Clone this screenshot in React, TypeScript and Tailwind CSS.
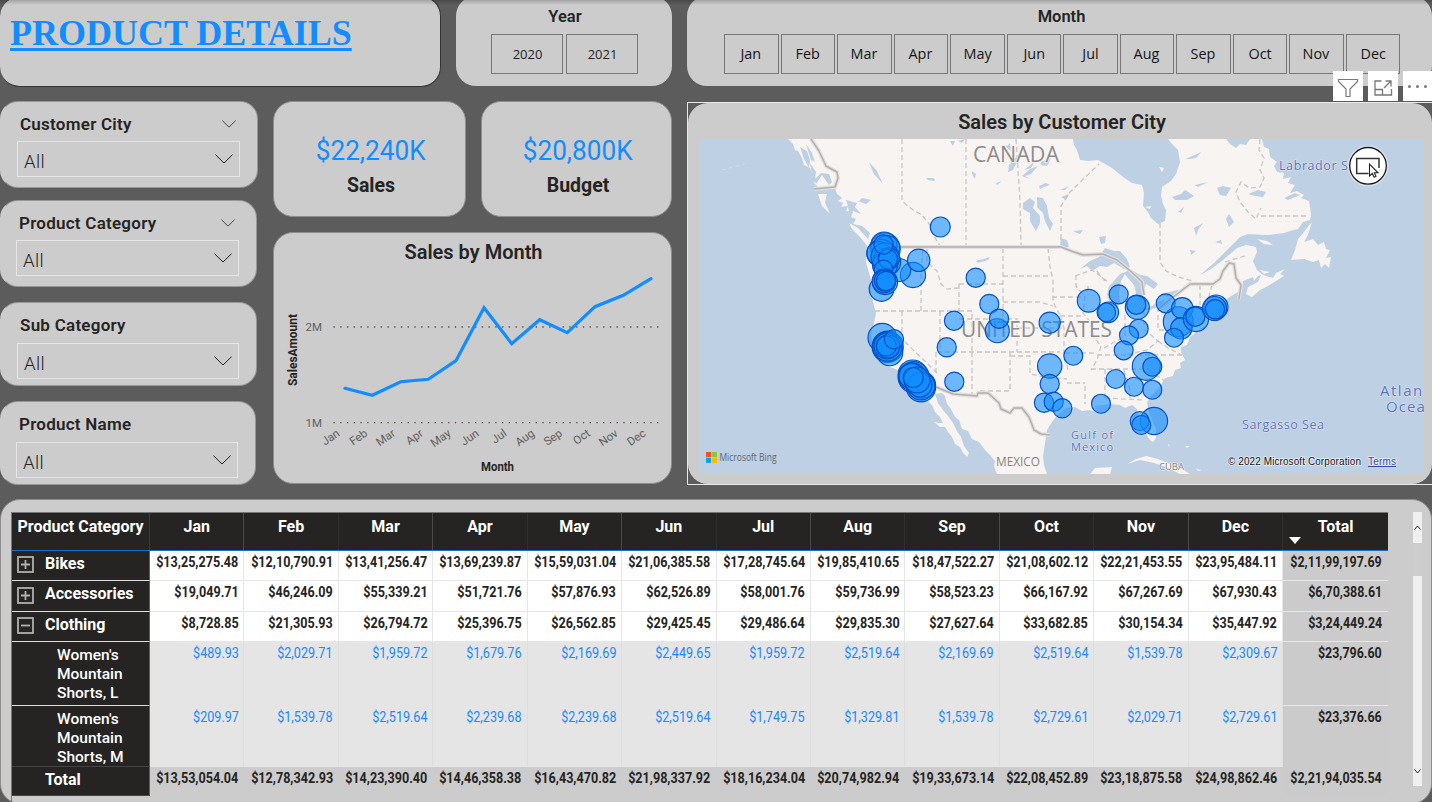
import React from "react";

const MONTHS = ["Jan", "Feb", "Mar", "Apr", "May", "Jun", "Jul", "Aug", "Sep", "Oct", "Nov", "Dec"];

const ROWS = [
  { label: "Bikes", kind: "plus", cells: ["$13,25,275.48", "$12,10,790.91", "$13,41,256.47", "$13,69,239.87", "$15,59,031.04", "$21,06,385.58", "$17,28,745.64", "$19,85,410.65", "$18,47,522.27", "$21,08,602.12", "$22,21,453.55", "$23,95,484.11"], total: "$2,11,99,197.69" },
  { label: "Accessories", kind: "plus", cells: ["$19,049.71", "$46,246.09", "$55,339.21", "$51,721.76", "$57,876.93", "$62,526.89", "$58,001.76", "$59,736.99", "$58,523.23", "$66,167.92", "$67,267.69", "$67,930.43"], total: "$6,70,388.61" },
  { label: "Clothing", kind: "minus", cells: ["$8,728.85", "$21,305.93", "$26,794.72", "$25,396.75", "$26,562.85", "$29,425.45", "$29,486.64", "$29,835.30", "$27,627.64", "$33,682.85", "$30,154.34", "$35,447.92"], total: "$3,24,449.24" },
  { label: "Women's Mountain Shorts, L", kind: "child", cells: ["$489.93", "$2,029.71", "$1,959.72", "$1,679.76", "$2,169.69", "$2,449.65", "$1,959.72", "$2,519.64", "$2,169.69", "$2,519.64", "$1,539.78", "$2,309.67"], total: "$23,796.60" },
  { label: "Women's Mountain Shorts, M", kind: "child", cells: ["$209.97", "$1,539.78", "$2,519.64", "$2,239.68", "$2,239.68", "$2,519.64", "$1,749.75", "$1,329.81", "$1,539.78", "$2,729.61", "$2,029.71", "$2,729.61"], total: "$23,376.66" },
  { label: "Total", kind: "total", cells: ["$13,53,054.04", "$12,78,342.93", "$14,23,390.40", "$14,46,358.38", "$16,43,470.82", "$21,98,337.92", "$18,16,234.04", "$20,74,982.94", "$19,33,673.14", "$22,08,452.89", "$23,18,875.58", "$24,98,862.46"], total: "$2,21,94,035.54" },
];

const ROW_HEIGHTS: Record<string, string> = {
  Bikes: "h-[30px]",
  Accessories: "h-[31px]",
  Clothing: "h-[30px]",
  "Women's Mountain Shorts, L": "h-[64px]",
  "Women's Mountain Shorts, M": "h-[61px]",
  Total: "h-[29px]",
};

function Chevron({ className }: { className: string }) {
  return (
    <svg className={className} viewBox="0 0 18 10" fill="none" stroke="#252423" strokeWidth="1">
      <path d="M0.5 0.7 L9 9 L17.5 0.7" />
    </svg>
  );
}

function Slicer({ title, chevron, className, boxClass }: { title: string; chevron?: boolean; className: string; boxClass: string }) {
  return (
    <section className={`rounded-[18px] border border-[#989898] border-l-transparent bg-[#cccccc] ${className}`}>
      <div className="flex h-5 items-center justify-between pr-5 pl-[3px]">
        <h2 className="text-[17px] leading-5 font-semibold tracking-[.25px] whitespace-nowrap">{title}</h2>
        {chevron && <Chevron className="mr-[-16px] h-[8px] w-[14px]" />}
      </div>
      <div className={`flex h-9 items-center justify-between border border-[#e6e6e6] pr-[6px] pl-[6px] ${boxClass}`}>
        <span className="pt-[5px] text-[18.5px] leading-5 font-light tracking-[.4px]">All</span>
        <Chevron className="h-[10px] w-[18px]" />
      </div>
    </section>
  );
}

const POINTS: [number, number][] = [
  [345, 388.3], [372.3, 395.3], [400.7, 381.7], [428.3, 379.3], [456, 360.7], [484, 307.7],
  [511.7, 343.7], [539.7, 319.7], [567.3, 332.7], [595, 306.7], [623.3, 295.3], [651, 278.7],
];

function LineChart() {
  return (
    <svg className="block h-[214px] w-full" viewBox="274 266 397 214">
      <g stroke="#4d4d4d" strokeWidth="1.3" strokeDasharray="1.3 5.44">
        <line x1="333.5" y1="327" x2="660" y2="327" />
        <line x1="333.5" y1="422.7" x2="660" y2="422.7" />
      </g>
      <g className="text-[11.5px]" fill="#605e5c">
        <text x="322" y="331" textAnchor="end">2M</text>
        <text x="322" y="427" textAnchor="end">1M</text>
        {MONTHS.map((m, i) => (
          <text key={m} transform={`translate(${340.5 + i * 27.83} 435) rotate(-35)`} textAnchor="end">{m}</text>
        ))}
      </g>
      <g className="text-[12px] font-bold" fill="#252423">
        <text x="481" y="471" textLength="33" lengthAdjust="spacingAndGlyphs">Month</text>
        <text transform="translate(296.5 386) rotate(-90)" textLength="72" lengthAdjust="spacingAndGlyphs">SalesAmount</text>
      </g>
      <polyline points={POINTS.map((p) => p.join(",")).join(" ")} fill="none" stroke="#118dff" strokeWidth="3.2" strokeLinecap="round" strokeLinejoin="miter" />
    </svg>
  );
}

const BUBBLES: [number, number, number][] = [
  [940.3, 227, 10], [913, 275, 12.6], [899.3, 270, 11.5], [918.7, 260.3, 11.2], [975.7, 277.7, 9.6],
  [881.5, 289, 12.3], [885, 247.5, 14.6], [884, 245, 13], [887, 249, 13.3], [881, 253.3, 14], [878.5, 253.3, 11.7], [886.7, 262, 14], [885, 265, 12.5],
  [885, 257, 14], [889, 258.5, 10.7], [888, 259, 9.5], [883.5, 244.5, 9.6], [883.5, 269.5, 9.4], [885, 282, 12.6], [884, 281, 11.8], [885, 280.5, 10.6], [886, 281, 9.6],
  [882.3, 337.7, 14.3], [887.7, 346.7, 15.6], [889.7, 352.7, 13], [887.5, 346.5, 14.6], [887, 346, 13], [888, 346.5, 11.6], [886.3, 346, 10], [894, 339.3, 9.6],
  [912.7, 374.5, 14.5], [913.7, 377.3, 15.6], [921, 387.3, 14.6], [922.3, 385, 13.3], [912.5, 377, 14], [911.7, 376, 12.7], [921, 386, 13.8], [920, 385, 12], [917, 380, 13], [913.3, 377.5, 10],
  [989.3, 304, 9.6], [997.3, 330.7, 12], [999, 318.7, 9.6], [954, 320.7, 9.6], [946.7, 347.3, 9.6], [954.3, 381.7, 9.6],
  [1049.7, 322.7, 10.6], [1049.7, 366, 12.2], [1049.7, 384, 9.6], [1044, 402.7, 9.6], [1053.7, 401.7, 9.6], [1062.3, 408.3, 9.6],
  [1088.7, 300.7, 11.4], [1118.7, 294.3, 9.5], [1108.3, 312.3, 10.3], [1106.3, 312.3, 9.3], [1137.3, 307.3, 12], [1136.3, 304.7, 9.6],
  [1178.3, 321.7, 15], [1165.7, 303.3, 9.5], [1182.3, 308.3, 10.7], [1181.3, 328.3, 10.7], [1196, 319, 12.6], [1195.3, 316.7, 9.6],
  [1174, 337.7, 9.5], [1216, 307, 12], [1214.5, 308.5, 12], [1215, 309.3, 9.6], [1138.7, 328.7, 9.5], [1129, 335.3, 9.5], [1123.7, 350.3, 9.5],
  [1073.3, 355.7, 9.5], [1146.3, 366.3, 14], [1152.3, 366.7, 9.5], [1115.7, 379, 9.5], [1134, 386.7, 9.5], [1152.3, 389.7, 9.5],
  [1101, 403.7, 9.5], [1154, 421, 13.6], [1139.7, 421, 9.5], [1141.3, 425, 9.5],
];

const LAND = `M788 139 L793 144 L795 150 L798 151 L802 158 L804 165 L810 168 L812 174 L816 179 L814 183 L818 187 L825 189 L835 188 L837 194 L842 198 L838 201
L843 203 L841 207 L848 206 L846 211 L853 212 L851 217 L856 219 L853 224 L862 226 L870 233 L868 240 L868 250 L866 262 L871 280 L871 292 L873 302 L876 313 L874 323 L871 333
L873 350 L878 357 L888 366 L898 370 L900 383 L905 390 L915 397 L927 400 L932 405 L935 412 L940 417 L943 423 L938 423 L934 422 L940 427 L945 427 L948 432 L952 437 L955 444 L960 447
L963 453 L967 457 L969 453 L964 446 L961 437 L957 431 L953 423 L948 416 L943 410 L938 403 L935 394 L942 393 L945 396 L947 404 L951 409 L955 417 L959 420 L962 429 L968 431 L972 439 L979 442
L985 450 L990 455 L995 461 L994 466 L997 474 L1047 474 L1044 465 L1043 457 L1045 443 L1047 430 L1052 422 L1058 414 L1066 408 L1075 407 L1082 411 L1090 410 L1098 413 L1095 406 L1110 404 L1120 405 L1125 408 L1132 405
L1137 409 L1139 421 L1145 432 L1150 440 L1153 442 L1156 438 L1156 429 L1150 415 L1147 403 L1150 397 L1160 387 L1165 378 L1173 376 L1175 370 L1181 368 L1180 363 L1185 360 L1181 352 L1181 347 L1187 345 L1190 337 L1200 329
L1210 322 L1213 316 L1220 318 L1217 311 L1219 306 L1228 298 L1238 292 L1242 287 L1243 281 L1253 277 L1254 281 L1258 276 L1261 275 L1258 282 L1248 287 L1246 294 L1252 297 L1260 290 L1268 286 L1276 281 L1284 276 L1280 274 L1285 269 L1276 273 L1273 278
L1263 275 L1257 270 L1253 261 L1257 252 L1256 247 L1246 245 L1237 248 L1223 260 L1211 269 L1200 275 L1214 263 L1220 257 L1230 247 L1240 237 L1248 234 L1267 235 L1284 233 L1290 231 L1298 229 L1303 222 L1310 220 L1311 215 L1310 207 L1309 201
L1301 198 L1304 195 L1297 191 L1290 193 L1295 185 L1288 183 L1291 177 L1283 179 L1284 173 L1277 172 L1274 166 L1277 162 L1270 157 L1269 149 L1264 147 L1262 139 L1250 139 L1246 145 L1240 144 L1236 148 L1230 144 L1226 139 L1168 139 L1171 143 L1178 150 L1180 162 L1176 174 L1171 181
L1162 187 L1161 196 L1163 204 L1166 210 L1165 221 L1158 224 L1151 218 L1148 212 L1143 206 L1144 193 L1142 185 L1132 183 L1123 177 L1112 168 L1098 160 L1088 161 L1080 160 L1077 150 L1074 145 L1073 139 Z`;

const WATER = [
  "M800 147 L807 151 L810 160 L809 168 L804 159 Z M810 163 L816 172 L815 179 L821 173 L829 174 L832 182 L829 185 L822 175 L816 184 L812 175 Z M806 144 L812 153 L815 162 L811 160 Z",
  "M846 200 L857 203 L862 198 L871 200 L866 204 L858 201 L855 207 L861 214 L853 211 L850 217 L848 206 Z",
  "M869 162 L877 171 L880 178 L883 184 L874 174 Z M926 178 L934 178 L935 181 L928 180 Z M950 141 L955 141 L953 146 Z M958 141 L965 139 L962 143 Z M972 171 L976 174 L975 179 L972 174 Z M996 183 L1002 181 L997 185 Z",
  "M1023 203 L1030 198 L1035 202 L1033 208 L1040 216 L1040 223 L1036 231 L1030 221 L1030 213 L1023 209 Z M1037 197 L1043 198 L1047 206 L1049 218 L1053 224 L1050 231 L1045 221 L1043 213 L1037 207 Z",
  "M1009 165 L1016 157 L1018 160 L1013 170 L1008 172 Z M1022 176 L1030 169 L1038 166 L1031 174 L1025 176 L1030 179 Z M1039 186 L1046 183 L1050 185 L1044 187 L1040 189 Z M1041 162 L1051 158 L1047 166 L1041 165 Z M1024 170 L1035 161 L1031 168 Z M1006 147 L1010 143 L1011 151 Z",
  "M1060 238 L1067 240 L1069 247 L1062 248 Z M1073 231 L1083 230 L1080 234 Z M1099 237 L1106 236 L1105 243 L1101 244 Z M1060 190 L1069 186 L1065 190 Z M1061 197 L1069 194 L1066 200 Z M976 261 L983 259 L990 257 L988 260 L981 262 L978 263 Z",
  "M1185 159 L1195 155 L1201 152 L1196 158 L1190 159 Z M1172 197 L1181 194 L1185 190 L1194 196 L1187 200 L1175 200 Z M1195 185 L1208 182 L1198 187 Z M1217 188 L1223 186 L1231 188 L1226 196 L1220 195 Z M1248 194 L1258 190 L1266 192 L1263 197 L1255 196 Z M1194 228 L1203 223 L1198 230 L1196 236 Z M1226 219 L1229 214 L1234 222 L1229 227 Z M1178 212 L1184 207 L1181 213 Z M1284 198 L1295 193 L1300 195 L1288 200 Z M1190 250 L1196 251 L1191 255 Z M1215 242 L1221 240 L1222 244 Z",
  "M1080 269 L1090 261 L1099 257 L1105 248 L1114 251 L1120 251 L1127 259 L1130 267 L1124 269 L1114 263 L1107 267 L1100 266 L1092 271 L1087 266 Z",
  "M1109 286 L1114 281 L1119 275 L1122 273 L1126 272 L1121 281 L1119 293 L1120 302 L1117 308 L1110 303 L1107 295 Z",
  "M1124 273 L1130 269 L1140 275 L1147 276 L1154 281 L1158 284 L1154 289 L1146 284 L1143 293 L1142 302 L1137 298 L1134 285 L1128 278 Z",
  "M1140 310 L1150 307 L1158 302 L1165 299 L1161 306 L1150 310 Z M1160 294 L1169 292 L1178 290 L1177 295 L1167 297 Z",
];

const STATE_LINES = [
  "M902 139 V201 L913 210 L922 215 L930 225 L934 236 L940 246", "M966 139 V246", "M1016 139 L1020 200 L1021 246", "M1061 247 V206 L1070 192 L1099 164",
  "M1160 223 V262 L1166 271 L1178 277 L1193 281", "M1260 139 L1259 150 L1264 158 L1260 170 L1264 178 L1260 187 L1249 188 L1241 182 L1236 192 L1240 202 L1248 212 L1256 219 L1261 208 M1261 216 H1308",
  "M875 311 H960 M902 311 V339 L937 373 M921 311 V275 L923 248 M927 248 V262 L937 271 L941 284 L947 289 L958 288 M959 284 V311 M940 311 V352 M959 284 H1003 M1003 248 V319 M1003 276 H1051 M959 311 H972 V352 M959 319 H1017 V352 M937 352 H1060 M972 352 V395 M936 352 V374 M1010 352 V391 H979 M1017 328 H1064 M1003 302 H1040 L1053 306",
  "M1048 248 L1050 267 L1053 280 V302 L1060 315 L1064 328 V352 L1068 370 M1010 356 H1030 V374 L1044 377 L1067 379 M1052 297 H1085 M1076 275 V286 L1085 297 L1083 313 L1091 323 L1094 337 L1101 346 L1097 360 L1091 370 M1060 316 H1083 M1065 353 H1094 M1067 383 H1085 M1085 386 V404 M1105 369 V400 M1091 369 H1149 M1097 355 H1182 M1124 370 L1130 390 V401 M1105 398 L1145 400 M1125 315 V337 M1144 312 V328 M1104 348 L1125 336 M1144 329 L1158 341 L1147 350 L1124 355 M1158 307 V330 H1190 M1149 370 L1166 382 M1158 341 L1168 348 L1182 355",
  "M1200 285 V305 M1212 285 L1207 304 M1075 276 L1092 270 L1107 281 M1105 281 L1090 263 M1088 286 V295 M1225 262 L1245 256",
];

function MapCanvas() {
  return (
    <svg className="block h-[335px] w-[725px]" viewBox="699 139 725 335">
      <rect x="699" y="139" width="725" height="335" fill="#bed0e4" />
      <path d="M722 170 L748 163" stroke="#cddbe9" strokeDasharray="4 3" />
      <path d={LAND} fill="#f7f4f2" />
      <g fill="#f7f4f2">
        <path d="M818 194 L827 194 L825 202 L830 214 L822 206 Z M849 223 L858 228 L868 239 L868 247 L860 237 L852 229 Z" />
        <path d="M1309 225 L1312 222 L1308 235 L1304 242 L1313 239 L1318 245 L1324 242 L1326 249 L1330 250 L1326 258 L1331 257 L1329 268 L1325 264 L1321 268 L1319 260 L1313 262 L1304 259 L1291 260 L1295 250 L1298 239 L1304 232 Z" />
        <path d="M1257 239 L1267 241 L1273 245 L1264 244 Z M1260 270 L1270 272 L1264 274 Z" />
        <path d="M1127 464 L1136 459 L1146 456 L1158 459 L1170 464 L1182 469 L1190 474 L1180 474 L1166 467 L1154 463 L1140 460 Z M1090 474 L1095 468 L1112 467 L1110 474 Z M1196 469 L1202 470 L1198 471 Z" />
        <path d="M1145 207 L1151 206 L1150 209 Z M1159 167 L1164 168 L1162 172 Z M1169 444 L1170 447 L1168 445 Z M1185 446 L1190 446 L1187 448 Z" />
      </g>
      <g fill="#bed0e4">{WATER.map((d) => <path key={d} d={d} />)}</g>
      <g fill="none" stroke="#cbc6c4" strokeWidth="1.3" strokeDasharray="5 3">{STATE_LINES.map((d) => <path key={d} d={d} />)}</g>
      <g fill="none" strokeLinejoin="round">
        {[["#e3dfde", 4], ["#b3b0b0", 1.5]].map(([stroke, width]) => (
          <g key={stroke} stroke={stroke as string} strokeWidth={width}>
            <path d="M811 139 L819 151 L826 166 L837 172 L838 178 L835 187 L814 189" />
            <path d="M885 247 H1061 L1074 252 L1083 255 L1103 254 L1117 260 L1128 269 L1137 277 L1142 282 L1144 295 M1158 309 L1176 295 L1190 284 H1213 L1220 279 L1223 271 L1229 263 L1234 264 L1236 278 L1241 285 L1239 299" />
            <path d="M936 387 L953 394 L977 396 L978 393 L988 393 L999 403 L1001 409 L1010 413 L1014 408 L1022 408 L1029 417 L1034 430 L1041 434 L1050 435" />
          </g>
        ))}
      </g>
      <g className="font-['Open_Sans',sans-serif]" stroke="#f7f4f2" strokeWidth="1.4" paintOrder="stroke">
        <text x="973" y="161.5" className="text-[21px]" textLength="86" lengthAdjust="spacingAndGlyphs" fill="#8e8c8c">CANADA</text>
        <text x="961" y="337" className="text-[21px]" textLength="151" lengthAdjust="spacingAndGlyphs" fill="#8e8c8c">UNITED STATES</text>
        <text x="996" y="466" className="text-[12px]" textLength="44" lengthAdjust="spacingAndGlyphs" fill="#858383" strokeWidth="1">MEXICO</text>
        <text x="1159" y="470" className="text-[9.5px]" textLength="25" fill="#858585" strokeWidth="1">CUBA</text>
      </g>
      <g className="font-['Open_Sans',sans-serif] font-medium" fill="#5c72bb" stroke="#dfe6f0" strokeWidth="1.2" paintOrder="stroke">
        <text x="1279" y="170" className="text-[12.5px]" textLength="84">Labrador Sea</text>
        <text x="1242" y="429" className="text-[12.5px]" textLength="82">Sargasso Sea</text>
        <text x="1071" y="439" className="text-[11px]" textLength="42">Gulf of</text>
        <text x="1071" y="450.5" className="text-[11px]" textLength="42">Mexico</text>
        <text x="1380" y="396" className="text-[15px]" textLength="63">Atlantic</text>
        <text x="1386" y="412" className="text-[15px]" textLength="49">Ocean</text>
      </g>
      <g fill="#118dff" fillOpacity="0.6" stroke="#0450c4" strokeWidth="1.15">
        {BUBBLES.map(([x, y, r], i) => <circle key={i} cx={x} cy={y} r={r} />)}
      </g>
      <g>
        <path d="M706 452h5v5h-5z" fill="#f25022" /><path d="M711.7 452h5.3v5h-5.3z" fill="#8cc43c" />
        <path d="M706 457.7h5v5.2h-5z" fill="#00a4ef" /><path d="M711.7 457.7h5.3v5.2h-5.3z" fill="#ffb900" />
        <text x="719.5" y="461" className="font-['Open_Sans',sans-serif] text-[10px]" textLength="57" lengthAdjust="spacingAndGlyphs" fill="#5d6672">Microsoft Bing</text>
      </g>
      <g className="font-['Liberation_Sans',sans-serif] text-[10px]" stroke="#e8edf4" strokeWidth="1.6" paintOrder="stroke">
        <text x="1228" y="464.5" textLength="133" fill="#111">© 2022 Microsoft Corporation</text>
        <text x="1368" y="464.5" textLength="28" fill="#3549a5">Terms</text>
      </g>
      <path d="M1368 466.5 H1396" stroke="#3549a5" strokeWidth="1" />
      <circle cx="1368" cy="166" r="20.5" fill="#fff" fillOpacity="0.35" />
      <circle cx="1368" cy="165.8" r="18.3" fill="#fff" stroke="#1b1b1b" strokeWidth="1.3" />
      <path d="M1368.5 173.5 H1356.7 V158.5 H1379 V168" fill="none" stroke="#333" strokeWidth="1.5" />
      <path d="M1369.5 164 V176 L1372.3 173.5 L1374.2 177.2 L1376 176.2 L1374.3 172.8 H1378 Z" fill="#fff" stroke="#222" strokeWidth="1.1" />
    </svg>
  );
}

function Toolbar() {
  return (
    <div className="absolute top-[71px] right-0 flex gap-[5px]">
      <span className="flex size-[30px] items-center justify-center bg-white">
        <svg className="mt-1 size-[22px]" viewBox="0 0 22 22" fill="none" stroke="#777" strokeWidth="1.2"><path d="M1.5 2.5 H20.5 V4.5 L13 12 V19.5 H9 V12 L1.5 4.5 Z" /></svg>
      </span>
      <span className="flex size-[30px] items-center justify-center bg-white">
        <svg className="mt-1 size-[20px]" viewBox="0 0 20 20" fill="none" stroke="#777" strokeWidth="1.3"><path d="M8.5 3 H2 V17 H18.5 V11 M2 11.5 H9.5 V17 M11 10 L17.5 3.5 M12.5 3 H18 V8.5" /></svg>
      </span>
      <span className="flex h-[30px] w-[29px] items-center justify-center gap-[5px] bg-white">
        {[0, 1, 2].map((i) => <i key={i} className="size-[3px] rounded-full bg-[#777]" />)}
      </span>
    </div>
  );
}

function Matrix() {
  return (
    <div className="flex w-[1377px] flex-col border-l border-[#777]">
      <div className="flex h-[39px] border-t border-b border-t-[#777] border-b-[#1b6fc4] bg-[#252423] text-[16px] leading-5 font-bold text-white">
        <div className="w-[138px] shrink-0 border-r border-[#3a3a3a] pt-[4px] text-center whitespace-nowrap">Product Category</div>
        {MONTHS.map((m, i) => (
          <div key={m} className={`min-w-0 flex-1 border-r pt-[4px] text-center ${i % 2 === 0 ? "border-[#4a4a4a]" : "border-[#2f2f2e]"}`}>{m}</div>
        ))}
        <div className="relative w-[105px] shrink-0 pt-[4px] text-center">
          Total
          <span className="absolute top-[24px] left-[6px] border-x-[6px] border-t-[7px] border-x-transparent border-t-white" />
        </div>
      </div>
      {ROWS.map((row) => {
        const child = row.kind === "child";
        const total = row.kind === "total";
        const bg = child ? "bg-[#e5e5e5] text-[#2388fa]" : total ? "text-[#252423]" : "bg-white text-[#252423]";
        return (
          <div key={row.label} className={`flex ${ROW_HEIGHTS[row.label]} text-[14px] leading-[18px]`}>
            <div className={`flex w-[138px] shrink-0 border-r border-b border-r-[#1b6fc4] bg-[#252423] text-white ${total || row.label.endsWith("M") ? "border-b-[#444]" : "border-b-[#e0e0e0]"}`}>
              {child ? (
                <span className="ml-[45px] w-[80px] pt-[4px] text-[15.5px] leading-[19px] font-medium">{row.label}</span>
              ) : (
                <>
                  <span className="flex w-[33px] shrink-0 items-center pl-[5px]">
                    {!total && (
                      <svg className="mb-[2px] size-[17px]" viewBox="0 0 17 17" fill="none" stroke="#b0b0b0" strokeWidth="1.8">
                        <rect x="1" y="1" width="15" height="15" />
                        <path d={row.kind === "plus" ? "M4 8.5 H13 M8.5 4 V13" : "M4 8.5 H13"} />
                      </svg>
                    )}
                  </span>
                  <span className="pt-[3px] text-[16px] leading-5 font-bold">{row.label}</span>
                </>
              )}
            </div>
            {row.cells.map((c, i) => (
              <div key={i} className={`flex min-w-0 flex-1 justify-end pt-[2px] pr-[5px] ${bg} ${total ? "border-r border-r-transparent" : child ? "border-r border-r-[#dedede]" : "border-r border-b border-[#e6e6e6]"}`}>
                <span className={child ? "origin-right scale-x-[.9] font-normal" : "origin-right scale-x-[.9] font-bold"}>{c}</span>
              </div>
            ))}
            <div className={`flex w-[105px] shrink-0 justify-end bg-[#cbcbcb] pt-[2px] pr-[6px] font-bold text-[#252423] ${total || row.label.endsWith("M") ? "" : "border-b border-[#e6e6e6]"}`}>
              <span className="origin-right scale-x-[.89]">{row.total}</span>
            </div>
          </div>
        );
      })}
    </div>
  );
}

export default function App() {
  return (
    <main className="relative flex h-[802px] w-[1432px] flex-col overflow-hidden bg-[#5c5c5c] font-[Roboto,sans-serif] text-[#252423]">
      <header className="flex h-[101px] shrink-0 gap-[15px]">
        <section className="-mt-1 h-[91px] w-[441px] shrink-0 rounded-[20px] border border-l-0 border-[#333] bg-[#cccccc] pl-[10px]">
          <h1 className="pt-[16px] font-['Liberation_Serif',serif] text-[36px] leading-[40px] font-bold text-[#118dff] underline decoration-[3px] underline-offset-[3px]">PRODUCT DETAILS</h1>
        </section>
        <section className="-mt-1 h-[90px] w-[216px] shrink-0 rounded-[20px] bg-[#cccccc] pt-[10px]">
          <h2 className="pl-[2px] pt-px text-center text-[16.5px] leading-5 font-semibold">Year</h2>
          <div className="mt-[7px] flex justify-center gap-[3px] font-['Open_Sans',sans-serif] text-[13px]">
            {["2020", "2021"].map((y) => <button key={y} className="h-10 w-[72px] border border-[#777] pt-px pl-[2px]">{y}</button>)}
          </div>
        </section>
        <section className="-mt-1 h-[90px] w-[745px] shrink-0 rounded-[20px] bg-[#cccccc] pt-[10px] pl-[37px]">
          <h2 className="ml-[-37px] pt-px pl-[4px] text-center text-[16.5px] leading-5 font-semibold">Month</h2>
          <div className="mt-[7px] flex gap-[2px] font-['Open_Sans',sans-serif] text-[15px] text-[#151515]">
            {MONTHS.map((m) => <button key={m} className="h-10 w-[54.5px] border border-[#777] pb-[2px]"><span className="inline-block scale-x-[.96]">{m}</span></button>)}
          </div>
        </section>
      </header>

      <div className="flex h-[399px] shrink-0">
        <div className="flex w-[273px] shrink-0 flex-col">
          <Slicer title="Customer City" chevron className="h-[87px] w-[258px] pt-[12px] pr-[17px] pl-4" boxClass="mt-[7px]" />
          <Slicer title="Product Category" chevron className="mt-3 h-[87px] w-[257px] pt-[12px] pr-[17px] pl-[15px]" boxClass="mt-[7px]" />
          <Slicer title="Sub Category" className="mt-[15px] h-[84px] w-[257px] pt-[12px] pr-[17px] pl-4" boxClass="mt-[8px]" />
          <Slicer title="Product Name" className="mt-[15px] h-[84px] w-[256px] pt-[12px] pr-[17px] pl-[15px]" boxClass="mt-[8px]" />
        </div>
        <div className="flex w-[399px] shrink-0 flex-col">
          <div className="flex justify-between">
            {[["$22,240K", "Sales", "w-[193px]"], ["$20,800K", "Budget", "w-[191px]"]].map(([v, l, w]) => (
              <section key={l} className={`h-[116px] rounded-[20px] border border-[#8e8e8e] bg-[#cccccc] pt-[32px] pl-[3px] text-center ${w}`}>
                <div className="text-[27px] leading-[34px] text-[#118dff]"><span className="inline-block scale-x-[.97]">{v}</span></div>
                <div className="mt-[6px] text-[19.5px] leading-6 font-bold">{l}</div>
              </section>
            ))}
          </div>
          <section className="mt-[15px] h-[252px] rounded-[20px] border border-[#8e8e8e] bg-[#cccccc]">
            <h2 className="h-[33px] pt-[7px] pl-[2px] text-center text-[20px] leading-6 font-semibold">Sales by Month</h2>
            <LineChart />
          </section>
        </div>
        <div className="mt-px ml-[15px] h-[383px] w-[746px] shrink-0 border border-[#e8e8e8]">
          <section className="h-[381px] w-[744px] rounded-[20px] bg-[#cccccc] pl-[11px]">
            <h2 className="ml-[-11px] h-9 pt-[7px] pl-[4px] text-center text-[20px] leading-6 font-semibold">Sales by Customer City</h2>
            <MapCanvas />
          </section>
        </div>
      </div>

      <section className="-mt-px flex h-[305px] shrink-0 justify-between rounded-[20px] border border-[#8e8e8e] bg-[#cccccc] pt-3 pr-[9px] pl-[10px]">
        <Matrix />
        <div className="flex h-[274px] w-[9px] flex-col items-center overflow-hidden bg-[#f0f0f0]">
          <div className="flex h-[31px] items-center"><svg className="h-[5px] w-[7px]" viewBox="0 0 7 5" fill="none" stroke="#333"><path d="M.5 4.5 L3.5 1 L6.5 4.5" /></svg></div>
          <div className="h-[33px] w-full bg-[#cdcdcd]" />
          <div className="flex flex-1 items-end pb-3"><svg className="h-[5px] w-[7px]" viewBox="0 0 7 5" fill="none" stroke="#333"><path d="M.5 .5 L3.5 4 L6.5 .5" /></svg></div>
        </div>
      </section>
      <div className="pointer-events-none absolute inset-x-0 top-0 h-[5px] bg-gradient-to-b from-black/20 to-transparent" />
      <Toolbar />
    </main>
  );
}
